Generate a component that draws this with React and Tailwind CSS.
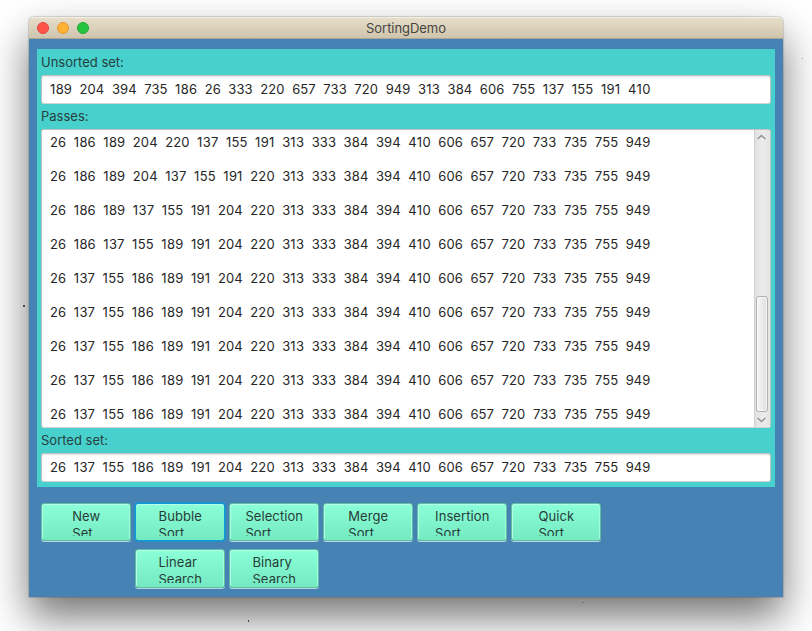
const unsorted = '189  204  394  735  186  26  333  220  657  733  720  949  313  384  606  755  137  155  191  410';
const sorted = '26  137  155  186  189  191  204  220  313  333  384  394  410  606  657  720  733  735  755  949';
const tail = '  313  333  384  394  410  606  657  720  733  735  755  949';
const passes = [
  '26  186  189  204  220  137  155  191' + tail,
  '26  186  189  204  137  155  191  220' + tail,
  '26  186  189  137  155  191  204  220' + tail,
  '26  186  137  155  189  191  204  220' + tail,
  sorted,
  sorted,
  sorted,
  sorted,
  sorted,
];

const rows = [
  [['New', 'Set'], ['Bubble', 'Sort', true], ['Selection', 'Sort'], ['Merge', 'Sort'], ['Insertion', 'Sort'], ['Quick', 'Sort']],
  [null, ['Linear', 'Search'], ['Binary', 'Search']],
];

// The digit one is narrow in this face, so it gets slightly looser tracking.
function Numbers({ children }) {
  return (
    <div className="whitespace-pre text-[13px] leading-[17px] tracking-[0.103px] text-[#262626]">
      {children.split(/(1)/).map((part, i) =>
        part === '1' ? <span key={i} className="tracking-[0.4px]">1</span> : part
      )}
    </div>
  );
}

function Field({ children }) {
  return (
    <div className="h-[29px] rounded-[3px] border border-[#bfc3c3] border-b-[#cfd3d3] bg-white pl-2 pt-[5px] shadow-[inset_0_2px_2px_-1px_#e2e2e2]">
      <Numbers>{children}</Numbers>
    </div>
  );
}

function SortButton({ lines, tall }) {
  const [first, second, focused] = lines;
  const frame = focused
    ? 'border-[#0c9bd5] shadow-[0_0_0_1px_#0c9bd599,inset_0_1px_0_#b4ffe7]'
    : 'border-[#60bea0] shadow-[0_1px_0_#b9d5df,inset_1px_1px_0_#b4ffe7,inset_-1px_0_0_#9effdf]';
  return (
    <button
      className={`flex w-[90px] justify-center rounded-[3px] border bg-gradient-to-b from-[#8bffd7] to-[#74e9c2] pl-[0.5px] pt-1 ${tall ? 'h-[39px]' : 'h-[38px]'} ${frame}`}
    >
      <span className={`block overflow-hidden text-left text-[13px] leading-[17px] tracking-[0.08px] text-[#273c38] ${tall ? 'h-[29px]' : 'h-[28px]'}`}>
        {first}
        <br />
        {second}
      </span>
    </button>
  );
}

function Chevron({ down }) {
  return (
    <svg className="mr-px" width="9" height="6" viewBox="0 0 9 6" fill="none" stroke="#929292" strokeWidth="1.4">
      <path d={down ? 'M.6 .9 4.5 4.6 8.4 .9' : 'M.6 5.1 4.5 1.4 8.4 5.1'} />
    </svg>
  );
}

export default function App() {
  return (
    <div className="relative h-[631px] w-[812px] overflow-hidden bg-white pl-[29px] pt-[17px] font-['Inter','Liberation_Sans',sans-serif]">
      <main className="h-[580px] w-[754px] rounded-t-[5px] bg-[#4682b4] shadow-[0_0_1px_1px_#00000026,0_20px_40px_0px_#0000008c]">
        <header className="grid h-[22px] grid-cols-[1fr_auto_1fr] items-center rounded-t-[5px] border-b border-[#aca48f] bg-gradient-to-b from-[#e8dfcb] to-[#cfc5ae] px-2 shadow-[inset_0_1px_0_#f5efe2]">
          <div className="flex gap-2">
            <span className="size-3 rounded-full border border-[#e2463f] bg-[#ff5549]" />
            <span className="size-3 rounded-full border border-[#df9a34] bg-[#ffb132]" />
            <span className="size-3 rounded-full border border-[#20a936] bg-[#24c33e]" />
          </div>
          <h1 className="text-[13px] leading-[20px] tracking-[-0.05px] text-[#48443f]">SortingDemo</h1>
          <span />
        </header>

        <div className="px-2 pt-[10px]">
          <section className="h-[438px] bg-[#48d1cc] px-1 text-[13px] leading-[17px] text-[#263f40]">
            <p className="h-[26px] pt-[5px]">Unsorted set:</p>
            <Field>{unsorted}</Field>
            <p className="h-[25px] pt-1">Passes:</p>
            <div className="flex h-[299px] overflow-hidden rounded-[3px] border border-[#bfc3c3] border-b-[#cfd3d3] bg-white">
              <div className="flex flex-1 flex-col gap-[17px] pl-2 pt-[4px]">
                {passes.map((line, i) => <Numbers key={i}>{line}</Numbers>)}
              </div>
              <div className="flex w-4 flex-col items-center border-l border-[#d1d1d1] bg-gradient-to-r from-[#e0e0e0] via-[#ececec] to-[#e5e5e5] pb-1 pr-px pt-[4px]">
                <Chevron />
                <div className="mb-[5px] mt-auto h-[116px] w-[12px] shrink-0 rounded-[3px] border border-[#b0b0b0] bg-gradient-to-r from-[#f6f6f6] to-[#dedede] shadow-[inset_0_0_0_1px_#ffffffb3]" />
                <Chevron down />
              </div>
            </div>
            <p className="h-[25px] pt-1">Sorted set:</p>
            <Field>{sorted}</Field>
          </section>
        </div>

        <div className="flex flex-col gap-2 pl-3 pt-4">
          {rows.map((row, r) => (
            <div key={r} className="flex gap-1">
              {row.map((b, i) => (b ? <SortButton key={i} lines={b} tall={r === 1} /> : <span key={i} className="w-[90px]" />))}
            </div>
          ))}
        </div>
      </main>
      <span className="absolute left-[23px] top-[305px] size-[2px] rounded-full bg-[#222]" />
      <span className="absolute left-[248px] top-[620px] h-[2px] w-px bg-[#444]" />
      <span className="absolute left-[802px] top-[58px] size-px bg-[#999]" />
      <span className="absolute left-[582px] top-[602px] h-px w-[2px] bg-[#777]" />
    </div>
  );
}
